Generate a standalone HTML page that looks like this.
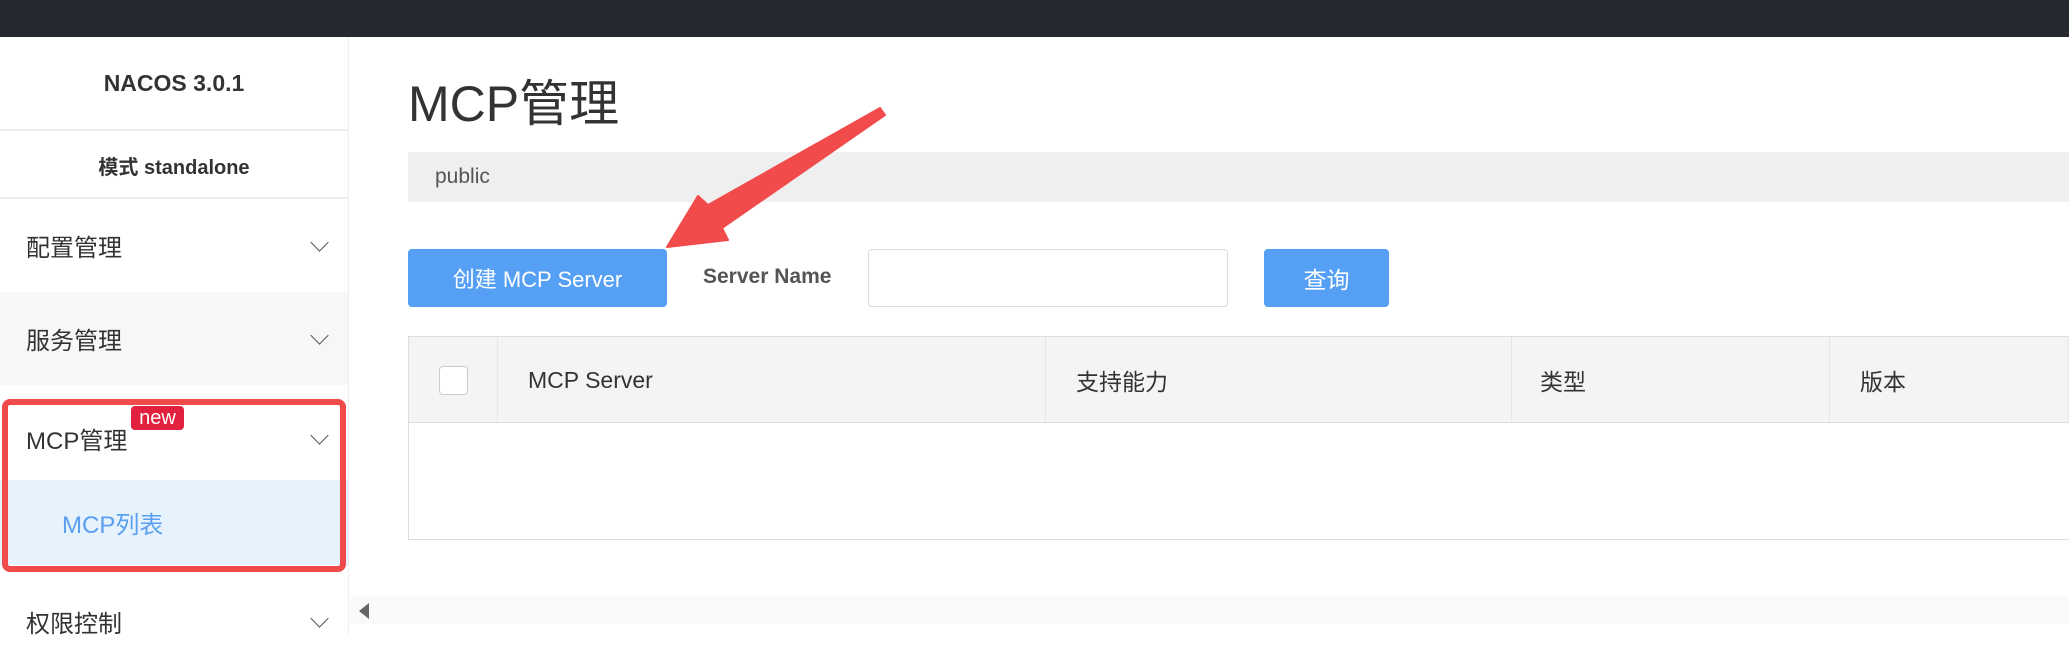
<!DOCTYPE html>
<html><head><meta charset="utf-8"><style>
*{margin:0;padding:0;box-sizing:border-box}
body{width:2069px;height:634px;overflow:hidden;background:#fff;font-family:"Liberation Sans","Noto Sans CJK SC",sans-serif;position:relative;color:#333}
.abs{position:absolute}
.top{left:0;top:0;width:2069px;height:37px;background:#25282e}
.side{left:0;top:37px;width:349px;height:597px;border-right:1px solid #eee}
.c{display:flex;align-items:center;justify-content:center}
.item{left:0;width:348px;font-size:24px;color:#333;display:flex;align-items:center;padding-left:26px}
.chev{position:absolute;right:22px;width:13px;height:13px;border-right:1.6px solid #555;border-bottom:1.6px solid #555;transform:rotate(45deg);margin-top:-6px}
.th{top:337px;height:86px;background:#f4f4f4;border-right:1px solid #e6e6e6;font-size:23px;display:flex;align-items:center;color:#333}
</style></head><body>
<div class="abs top"></div>
<div class="abs side"></div>
<div class="abs c" style="left:0;top:60px;width:348px;height:46px;font-size:23px;font-weight:bold">NACOS 3.0.1</div>
<div class="abs" style="left:0;top:129px;width:348px;height:2px;background:#eee"></div>
<div class="abs c" style="left:0;top:148px;width:348px;height:34px;font-size:20px;font-weight:bold">模式 standalone</div>
<div class="abs" style="left:0;top:197px;width:348px;height:2px;background:#eee"></div>
<div class="abs item" style="top:199px;height:93px">配置管理<span class="chev"></span></div>
<div class="abs item" style="top:292px;height:93px;background:#f7f7f7">服务管理<span class="chev"></span></div>
<div class="abs item" style="top:397px;height:83px">MCP管理<span class="chev"></span></div>
<div class="abs c" style="left:131px;top:406px;width:53px;height:24px;background:#e2213e;color:#fff;border-radius:4px;font-size:20px">new</div>
<div class="abs item" style="top:480px;height:85px;background:#e6f2fc;color:#5a9ff0;padding-left:62px">MCP列表</div>
<div class="abs" style="left:2px;top:399px;width:344px;height:173px;border:6px solid #f04a4a;border-radius:8px"></div>
<div class="abs item" style="top:596px;height:50px">权限控制<span class="chev"></span></div>
<div class="abs" style="left:350px;top:596px;width:1719px;height:28px;background:#fafafa"></div>
<div class="abs" style="left:359px;top:603px;width:0;height:0;border-top:8px solid transparent;border-bottom:8px solid transparent;border-right:10px solid #666"></div>

<div class="abs" style="left:408px;top:74px;font-size:50px;color:#333;line-height:60px">MCP管理</div>
<div class="abs" style="left:408px;top:152px;width:1661px;height:50px;background:#efefef;font-size:21px;color:#555;padding-left:27px;line-height:50px">public</div>
<div class="abs c" style="left:408px;top:249px;width:259px;height:58px;background:#559ff5;border-radius:4px;color:#fff;font-size:22px">创建 MCP Server</div>
<div class="abs" style="left:703px;top:265px;font-size:21px;font-weight:bold;color:#555">Server Name</div>
<div class="abs" style="left:868px;top:249px;width:360px;height:58px;border:1px solid #ddd;border-radius:4px"></div>
<div class="abs c" style="left:1264px;top:249px;width:125px;height:58px;background:#559ff5;border-radius:4px;color:#fff;font-size:23px">查询</div>

<div class="abs" style="left:408px;top:336px;width:1661px;height:204px;border:1px solid #ddd;border-right:none"></div>
<div class="abs th" style="left:409px;width:89px;justify-content:center"><div style="width:29px;height:29px;background:#fff;border:1px solid #ccc;border-radius:4px"></div></div>
<div class="abs th" style="left:498px;width:548px;padding-left:30px">MCP Server</div>
<div class="abs th" style="left:1046px;width:466px;padding-left:30px">支持能力</div>
<div class="abs th" style="left:1512px;width:318px;padding-left:28px">类型</div>
<div class="abs th" style="left:1830px;width:239px;padding-left:30px">版本</div>
<div class="abs" style="left:408px;top:422px;width:1661px;height:1px;background:#ddd"></div>

<svg class="abs" style="left:0;top:0" width="2069" height="634"><polygon points="880,108 885,115 722,228 728,240 667,247 698,196 708,205" fill="#f24b4b" stroke="#f24b4b" stroke-width="2" stroke-linejoin="round"/></svg>
</body></html>
